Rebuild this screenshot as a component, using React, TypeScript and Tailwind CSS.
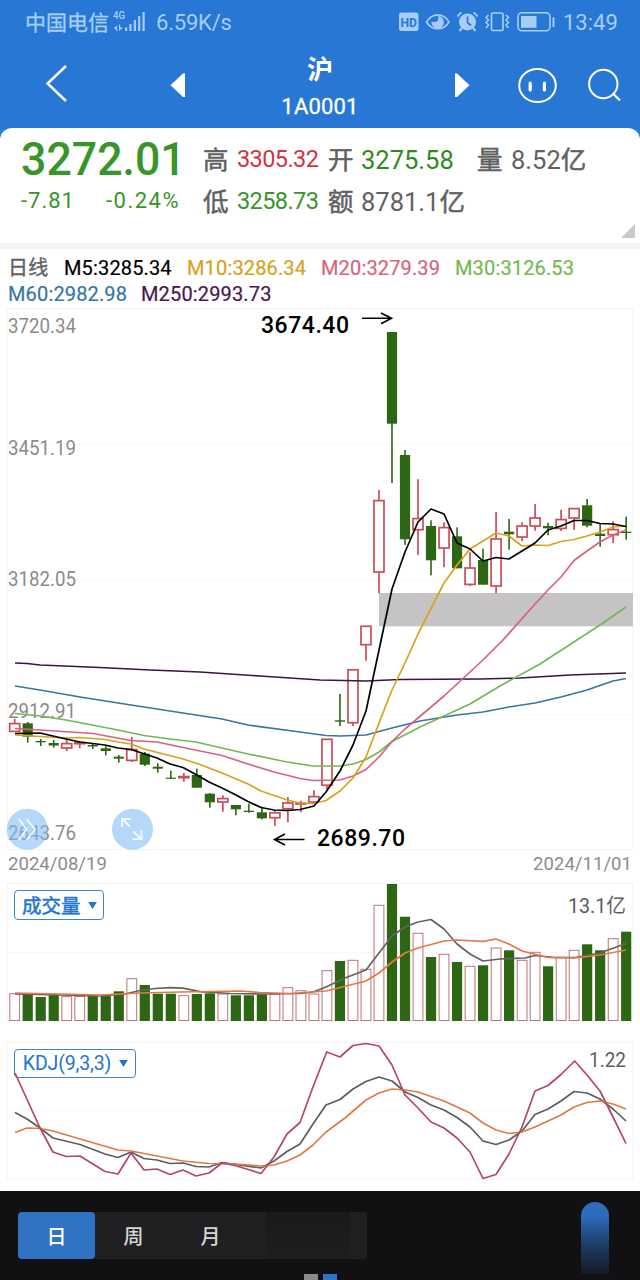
import React from 'react';

type Candle = [up: 0 | 1, high: number, top: number, bottom: number, low: number, volumeTop: number];
type Point = [number, number];

const candles: Candle[] = [
  [1, 718.7, 723.3, 731.7, 732, 993.7], [0, 722, 723.3, 736.7, 742.7, 994],
  [0, 739, 741, 742.3, 746, 997], [0, 740, 743, 745.5, 747.7, 994.7],
  [1, 740, 743.3, 748.3, 751, 996.7], [1, 741, 742.5, 744, 748.3, 996.5],
  [0, 743.3, 745, 746.5, 749, 995.5], [0, 745.5, 748.3, 751, 755.5, 996],
  [0, 755, 756.7, 758.7, 762.7, 991.3], [1, 736.7, 749.3, 760.7, 762, 978.7],
  [0, 752, 753.7, 764.7, 766, 985], [0, 763.3, 766.7, 768.7, 772.7, 993.7],
  [0, 770.7, 777.6, 778.8, 779, 993.7], [1, 773, 776.3, 778, 781.7, 995.7],
  [0, 768.7, 775, 787.7, 787.7, 994], [0, 793, 793.7, 802.3, 807.7, 993.3],
  [1, 795.3, 798.3, 802.3, 811.7, 994], [0, 805, 805, 809.3, 815.3, 995.3],
  [0, 803.7, 810.7, 812, 812.7, 995.3], [0, 806.7, 812.3, 818.3, 819.3, 994.3],
  [1, 810.7, 812.5, 818, 825.7, 994.3], [1, 797, 802.7, 809, 822.3, 987.7],
  [1, 800.7, 803, 804.3, 812.3, 990.7], [1, 790.3, 796.3, 802.3, 802.3, 994],
  [1, 739, 739, 785.5, 789.3, 970.7], [0, 694, 720.3, 721.7, 726, 961],
  [1, 669.5, 669.5, 723, 726, 960.3], [1, 626, 626, 645, 660.7, 969.3],
  [1, 490, 500.3, 572.3, 593.3, 905.3], [0, 332, 332, 423.7, 483, 884],
  [0, 450, 455, 539.3, 545, 916.7], [1, 479.3, 518.3, 530, 555, 933.3],
  [0, 520.3, 526, 560.3, 575.3, 957], [1, 522.3, 527.3, 548.3, 567.3, 954.3],
  [0, 527.3, 536.3, 568.3, 568.3, 962], [1, 552.3, 567.7, 584.7, 586, 966.3],
  [0, 548.7, 560, 584.7, 584.7, 965.3], [1, 512, 538.7, 586.3, 593.3, 948],
  [0, 519, 531.7, 534.3, 549.7, 950.3], [1, 522.3, 525.7, 537.3, 541.3, 960.3],
  [1, 504, 517.7, 526.3, 530.7, 952.3], [0, 522.7, 526, 528.3, 535.3, 966.3],
  [1, 509.7, 519.3, 528.7, 531, 957.3], [1, 508.3, 508.3, 518.3, 530, 950.3],
  [0, 499, 505.3, 525.7, 527.3, 944.3], [0, 523.7, 533.7, 536, 546.7, 950.3],
  [1, 521.3, 529.3, 535, 543, 938.7], [0, 516.7, 531.7, 533, 539.7, 931.7],
];

const averages: { color: string; points: Point[] }[] = [
  { color: '#3b1345', points: [[15, 663], [27, 663.5], [40, 665], [100, 667.5], [150, 670], [200, 672], [260, 676], [320, 680], [366, 681], [400, 679.5], [480, 679], [520, 678], [570, 675], [626, 673]] },
  { color: '#3676a0', points: [[15, 686], [40, 690], [80, 697], [131, 705], [183, 713], [222, 719], [248, 725], [300, 732], [326, 735.5], [340, 736], [366, 735], [392, 728], [420, 721], [457, 715], [483, 712], [509, 707], [535, 703], [561, 697], [587, 690], [613, 681], [626, 678.5]] },
  { color: '#72b950', points: [[15, 713.5], [40, 716], [66, 720], [92, 725], [118, 730], [144, 735.5], [170, 739], [196, 742], [222, 748], [248, 754], [287, 762], [313, 766], [340, 766], [353, 764], [366, 759.5], [379, 752], [392, 741.5], [420, 727], [470, 704], [500, 686], [540, 664], [577, 640], [600, 625], [626, 607]] },
  { color: '#d7637b', points: [[15, 728.5], [40, 730], [93, 733.5], [131, 740.5], [157, 742], [183, 747.5], [222, 755.5], [248, 764], [274, 772], [300, 778.5], [313, 780.5], [340, 780], [353, 776], [366, 769.5], [379, 757], [392, 741.5], [405, 729], [444, 696], [483, 660], [503, 640], [535, 604], [548, 590], [561, 577], [574, 560.5], [587, 551], [600, 542], [613, 535], [626, 530]] },
  { color: '#d9a21e', points: [[15, 735], [66, 738], [80, 737.5], [105, 739.5], [118, 742], [131, 744], [144, 749], [183, 759], [200, 764.5], [222, 773], [248, 784], [261, 791], [287, 800], [300, 803], [314, 803.5], [326, 800.5], [340, 791], [353, 778], [366, 757], [379, 723], [392, 690], [405, 663], [418, 634], [444, 583], [457, 565], [470, 549], [483, 541], [496, 533], [509, 536], [522, 546], [535, 545], [548, 545.5], [561, 541.5], [574, 539.5], [587, 536], [600, 532], [613, 527], [626, 526]] },
  { color: '#000000', points: [[15, 733.5], [40, 733], [66, 739], [80, 742], [105, 745], [118, 748], [131, 749.5], [157, 758], [170, 764], [183, 767.5], [196, 774.5], [209, 782], [222, 788], [235, 794.5], [248, 801.5], [261, 807.5], [274, 810], [287, 810.5], [300, 809.5], [314, 806], [326, 792], [340, 771], [353, 745], [366, 711], [379, 650], [392, 589], [405, 552], [418, 522], [431, 509], [444, 514], [457, 543], [470, 549], [483, 561], [496, 557.5], [509, 559], [535, 543], [548, 530], [561, 526], [574, 520.5], [587, 520.5], [600, 523.5], [613, 524], [626, 526.5]] },
];

const volumeLines: { color: string; points: Point[] }[] = [
  { color: '#66635e', points: [[15, 994], [60, 995], [100, 996], [125, 994], [140, 990.5], [155, 988.5], [170, 987.7], [183, 988.2], [200, 991.7], [230, 993.5], [262, 994], [300, 993.5], [313, 992], [326, 987], [345, 978], [366, 970], [379, 953], [392, 936], [405, 927], [418, 922], [431, 919.5], [444, 929], [457, 944], [470, 954], [483, 961], [500, 959], [525, 958], [535, 955.5], [555, 957.5], [575, 957.5], [600, 953], [626, 943.5]] },
  { color: '#e17a48', points: [[15, 993], [60, 994], [100, 995], [140, 993], [180, 992], [240, 991], [260, 992.5], [290, 993.5], [326, 991], [366, 981], [379, 973], [392, 962], [405, 953], [418, 948], [444, 941], [457, 940], [483, 941.3], [496, 939], [509, 944], [522, 951], [548, 957.5], [575, 958], [600, 955], [626, 950]] },
];

const kdjLines: { color: string; points: Point[] }[] = [
  { color: '#5b5f5c', points: [[15, 1112.5], [27, 1119], [40, 1128], [53, 1138], [80, 1144.5], [105, 1154], [118, 1157.5], [131, 1152], [144, 1158.5], [157, 1160], [170, 1163.5], [183, 1163], [196, 1166.5], [209, 1167], [222, 1162.5], [261, 1168], [274, 1161], [287, 1151.5], [300, 1144], [313, 1124], [326, 1105], [340, 1099.5], [353, 1089], [366, 1081.5], [379, 1077], [392, 1081], [405, 1092], [418, 1097.5], [431, 1105], [444, 1110], [457, 1117.5], [470, 1127], [483, 1141], [496, 1144.5], [509, 1140], [522, 1131], [535, 1114.5], [548, 1109], [561, 1101], [574, 1091.5], [587, 1093], [600, 1099], [613, 1109], [626, 1121]] },
  { color: '#e07a45', points: [[15, 1132.5], [27, 1128], [40, 1128.5], [53, 1131], [80, 1139], [118, 1150], [131, 1151], [157, 1156], [183, 1161], [209, 1163.5], [235, 1164], [261, 1166], [274, 1165], [287, 1161], [300, 1155], [313, 1145], [326, 1132], [345, 1118], [366, 1100], [379, 1093], [392, 1089], [405, 1090], [418, 1092], [444, 1101], [470, 1113], [483, 1123], [496, 1130], [509, 1133.5], [522, 1132], [535, 1127], [561, 1115], [574, 1107], [587, 1102.5], [600, 1101], [613, 1104], [626, 1109]] },
  { color: '#b54668', points: [[15, 1073], [40, 1128], [53, 1152], [66, 1156.5], [80, 1156], [105, 1171.5], [118, 1174], [131, 1153], [144, 1170], [157, 1169], [170, 1174.5], [183, 1170], [196, 1176], [209, 1173], [222, 1163], [235, 1165.5], [261, 1173.5], [274, 1157], [287, 1134], [300, 1122.5], [313, 1087], [326.7, 1052], [340, 1057], [353, 1045.5], [366, 1043.5], [379, 1046], [392, 1065], [405, 1095], [418, 1108], [431, 1122], [444, 1128], [457, 1138], [470, 1152], [483, 1178.5], [496, 1174.5], [509, 1154], [522, 1127], [535, 1091], [548, 1085.5], [561, 1074.5], [574.7, 1061], [587, 1075], [600, 1091], [613, 1117], [626, 1143.5]] },
];

const GREEN = '#2e6714';
const barX = (index: number) => 14.7 + index * 13.01;
const toPath = (points: Point[]) => points.map(([x, y]) => `${x},${y}`).join(' ');

function Lines({ lines }: { lines: { color: string; points: Point[] }[] }) {
  return (
    <>
      {lines.map((line) => (
        <polyline key={line.color} points={toPath(line.points)} fill="none" stroke={line.color} strokeWidth="1.7" strokeLinejoin="round" />
      ))}
    </>
  );
}

function AxisLabel({ y, children }: { y: number; children: string }) {
  return (
    <text x="8" y={y} textLength="68" lengthAdjust="spacingAndGlyphs" fill="#8b8b8b" className="text-[19.5px]">
      {children}
    </text>
  );
}

function PriceChart() {
  return (
    <div className="h-[542px]">
      <svg viewBox="0 308 640 542" className="block h-[542px] w-full overflow-visible">
        <rect x="7.5" y="308.5" width="625" height="541" fill="none" stroke="#f4f4f4" />
        <path d="M8 444.5H632M8 579.5H632M8 714.5H632" stroke="#f8f8f8" />
        <rect x="379" y="593" width="254" height="33.3" fill="#c5c3c4" />
        <AxisLabel y={333}>3720.34</AxisLabel>
        <AxisLabel y={455}>3451.19</AxisLabel>
        <AxisLabel y={586}>3182.05</AxisLabel>
        <AxisLabel y={718}>2912.91</AxisLabel>
        <AxisLabel y={840}>2643.76</AxisLabel>
        {candles.map(([up, high, top, bottom, low], i) => {
          const x = barX(i);
          return up ? (
            <g key={i} stroke="#cb4d56" strokeWidth="1.7" fill="#fff">
              <path d={`M${x} ${high}V${top}M${x} ${bottom}V${low}`} />
              <rect x={x - 5} y={top + 0.3} width="10" height={Math.max(bottom - top - 0.6, 0.5)} />
            </g>
          ) : (
            <g key={i} fill={GREEN}>
              <rect x={x - 0.8} y={high} width="1.6" height={low - high} />
              <rect x={x - 5.1} y={top} width="10.2" height={bottom - top} />
            </g>
          );
        })}
        <Lines lines={averages} />
        <g fill="none" stroke="#000" strokeWidth="1.6">
          <path d="M362 318.3H391M381 313L391.5 318.3L381 323.7" />
          <path d="M304.5 839.5H275M285 834L274.5 839.5L285 845" />
        </g>
        <text x="261" y="332.5" textLength="88" lengthAdjust="spacing" className="text-[23px] font-medium">3674.40</text>
        <text x="317" y="846" textLength="88" lengthAdjust="spacing" className="text-[23px] font-medium">2689.70</text>
        <g fill="#83bdf7" fillOpacity="0.6">
          <circle cx="27.3" cy="829.3" r="20.5" />
          <circle cx="132.5" cy="829.3" r="20.5" />
        </g>
        <g fill="none" stroke="#fff" strokeOpacity="0.85" strokeWidth="1.8">
          <path d="M19 819L26.5 829.3L19 840M26.5 819L35 829.3L26.5 840" />
          <path d="M130 826.5L122 819M122 827V819H131M133 831.5L141.5 839M141.5 830V839H132.5" />
        </g>
      </svg>
    </div>
  );
}

function VolumeChart() {
  return (
    <div className="relative h-[139px]">
      <button className="absolute top-[7px] left-[14px] flex h-[30px] w-[90px] items-center rounded-[4px] border border-[#3988c4] pl-[7px] text-[19.5px] text-[#2177cf]">
        <span className="pt-[3px] [-webkit-text-stroke:0.5px_currentColor]">成交量</span>
        <svg viewBox="0 0 10 8" className="ml-[7px] h-[7px] w-[9px]"><path d="M0 0H10L5 8Z" fill="currentColor" /></svg>
      </button>
      <svg viewBox="0 883 640 139" className="pointer-events-none relative block h-[139px] w-full">
        <rect x="7.5" y="883.5" width="625" height="137" fill="none" stroke="#f4f4f4" />
        <path d="M8 952.5H632" stroke="#f8f8f8" />
        {candles.map(([up, , , , , top], i) =>
          up ? (
            <rect key={i} x={barX(i) - 4.9} y={top} width="9.8" height={1020.5 - top} fill="#fff" stroke="#bd7378" strokeWidth="1" />
          ) : (
            <rect key={i} x={barX(i) - 5.1} y={top} width="10.2" height={1021 - top} fill={GREEN} />
          ),
        )}
        <Lines lines={volumeLines} />
        <text x="568" y="913" textLength="58" lengthAdjust="spacingAndGlyphs" fill="#5d5d5d" className="text-[20px]">13.1亿</text>
      </svg>
    </div>
  );
}

function KdjChart() {
  return (
    <div className="relative mt-[20px] h-[138px]">
      <button className="absolute top-[7px] left-[14px] flex h-[29px] w-[122px] items-center rounded-[4px] border border-[#3988c4] pl-[7px] text-[19.5px] text-[#2177cf]">
        <span className="w-[90px] pt-px tracking-[-0.15px]">KDJ(9,3,3)</span>
        <svg viewBox="0 0 10 8" className="ml-[7px] h-[7px] w-[9px]"><path d="M0 0H10L5 8Z" fill="currentColor" /></svg>
      </button>
      <svg viewBox="0 1042 640 138" className="pointer-events-none relative block h-[138px] w-full">
        <rect x="7.5" y="1042.5" width="625" height="136.5" fill="none" stroke="#f4f4f4" />
        <path d="M8 1110.5H632" stroke="#f8f8f8" />
        <Lines lines={kdjLines} />
        <text x="589" y="1067" textLength="37" lengthAdjust="spacingAndGlyphs" fill="#5d5d5d" className="text-[20px]">1.22</text>
      </svg>
    </div>
  );
}

function StatusBar() {
  return (
    <div className="flex h-[44px] items-center pl-[25px] text-[#a5cdf8]">
      <span className="w-[87px] pt-[2px] text-[21px] leading-none [-webkit-text-stroke:0.3px_currentColor]">中国电信</span>
      <svg viewBox="112 9 35 26" className="h-[26px] w-[35px]" fill="currentColor">
        <text x="113" y="19" textLength="12" lengthAdjust="spacingAndGlyphs" className="text-[10px] font-medium">4G</text>
        <path d="M116 25.500V31H117.200V25.500L114 28V28.700H116ZM119 24.500V31L122.500 28.300V27.500H120.200V24.500Z" />
        <path d="M125 27.5H127.200V31H125ZM129.400 24H131.600V31H129.400ZM133.800 20H136V31H133.800ZM138.100 16H140.300V31H138.100ZM142.500 12H144.700V31H142.500Z" />
      </svg>
      <span className="ml-[9px] w-[76px] pt-[2px] text-[22px] leading-none tracking-[-0.2px] whitespace-nowrap">6.59K/s</span>
      <svg viewBox="398 9 160 26" className="ml-[166px] h-[26px] w-[160px]" fill="none" stroke="currentColor">
        <rect x="399" y="12.5" width="19.5" height="18.5" rx="2.5" fill="currentColor" stroke="none" />
        <text x="400.5" y="26.5" textLength="16.5" lengthAdjust="spacingAndGlyphs" fill="#2877d5" stroke="none" className="text-[13px] font-bold">HD</text>
        <path d="M426.5 22C432 12.5 443.500 12.500 449 22C443.500 31 432 31 426.500 22Z" strokeWidth="1.6" />
        <path d="M438 16A6.200 6.200 0 1 1 431.500 21.500Q436 23 438 20.500Q439 18 438 16Z" fill="currentColor" stroke="none" />
        <circle cx="467.5" cy="22" r="8.5" fill="currentColor" stroke="none" />
        <path d="M457.5 16.500Q459 14 461.500 12.500M477.500 16.500Q476 14 473.500 12.500M462 28L459.500 31M473 28L475.500 31" strokeWidth="2" />
        <path d="M467.5 16.500V22.500L471 25.500" stroke="#2877d5" strokeWidth="1.7" />
        <rect x="491.5" y="13" width="11.5" height="17.5" rx="1.5" strokeWidth="1.7" />
        <path d="M488.5 15L486 17.500L488.500 20L486 22.500L488.500 25L486 28M506 15L508.500 17.500L506 20L508.500 22.500L506 25L508.500 28" strokeWidth="1.6" />
        <rect x="518" y="12.8" width="32" height="18" rx="4" strokeWidth="1.6" />
        <rect x="521" y="16" width="15.5" height="11.8" fill="currentColor" stroke="none" />
        <path d="M553.5 17.500V27" strokeWidth="2" />
      </svg>
      <span className="ml-[5px] pt-[2px] text-[22px] leading-none">13:49</span>
    </div>
  );
}

function TitleBar() {
  return (
    <div className="flex h-[84px] text-white">
      <svg viewBox="0 44 220 84" className="h-[84px] w-[220px]">
        <path d="M66 66L47.500 83.500L66 101" fill="none" stroke="#fff" strokeWidth="2.5" />
        <path d="M170.500 85.300L183 73.500H185V97H183Z" fill="#fff" />
      </svg>
      <div className="flex w-[200px] flex-col items-center pt-[11px]">
        <span className="text-[26px] leading-[30px] font-bold">沪</span>
        <span className="mt-[8px] text-[22px] leading-[28px] tracking-[0.2px] [-webkit-text-stroke:0.3px_currentColor]">1A0001</span>
      </div>
      <svg viewBox="420 44 220 84" className="h-[84px] w-[220px]" fill="none" stroke="#fff">
        <path d="M455 73.500H457L469.500 85.300L457 97H455Z" fill="#fff" stroke="none" />
        <ellipse cx="537.5" cy="85.5" rx="18.3" ry="16.5" strokeWidth="2" />
        <path d="M530.2 83V90M544.400 83V90" strokeWidth="3.2" strokeLinecap="round" />
        <circle cx="603.3" cy="84" r="14.2" strokeWidth="2" />
        <path d="M613 93.500L620 100.500" strokeWidth="2.3" />
      </svg>
    </div>
  );
}

function Quote() {
  return (
    <section className="relative flex h-[115px] rounded-t-[12px] bg-white text-[#616161]">
      <div className="w-[203px] pt-[6px] pl-[21px] text-[#37952a]">
        <div className="h-[50px] w-[180px] origin-left scale-x-[0.95] text-[47px] leading-[50px] font-medium whitespace-nowrap">3272.01</div>
        <div className="flex h-[32px] items-center text-[22px]">
          <span className="w-[85px] tracking-[1px]">-7.81</span>
          <span className="tracking-[1.5px]">-0.24%</span>
        </div>
      </div>
      <div className="grid h-[95px] grid-cols-[34px_91px_33px_116px_34px_90px] grid-rows-[42px_42px] items-center pt-[11px] text-[25.5px] whitespace-nowrap">
        <span className="[-webkit-text-stroke:0.5px_currentColor]">高</span>
        <span className="text-[23.5px] tracking-[-0.6px] text-[#ce3545]">3305.32</span>
        <span className="[-webkit-text-stroke:0.5px_currentColor]">开</span>
        <span className="text-[#2d8c18]">3275.58</span>
        <span className="[-webkit-text-stroke:0.5px_currentColor]">量</span>
        <span>8.52<span className="[-webkit-text-stroke:0.5px_currentColor]">亿</span></span>
        <span className="[-webkit-text-stroke:0.5px_currentColor]">低</span>
        <span className="text-[23.5px] tracking-[-0.6px] text-[#37952a]">3258.73</span>
        <span className="[-webkit-text-stroke:0.5px_currentColor]">额</span>
        <span>8781.1<span className="[-webkit-text-stroke:0.5px_currentColor]">亿</span></span>
      </div>
      <svg viewBox="0 0 14 14" className="absolute top-[96px] left-[621px] h-[14px] w-[14px]"><path d="M14 0V14H0Z" fill="#c9c9c9" /></svg>
    </section>
  );
}

function Legend() {
  return (
    <div className="h-[59px] border-t-[6px] border-[#f4f4f5] bg-white pt-[7px] pl-[8px] text-[20px] leading-[25.5px] tracking-[0.15px] whitespace-nowrap [-webkit-text-stroke:0.2px_currentColor]">
      <div className="flex">
        <span className="w-[56px] text-[#616161] [-webkit-text-stroke:0.4px_currentColor]">日线</span>
        <span className="w-[123px]">M5:3285.34</span>
        <span className="w-[134px] text-[#daa020]">M10:3286.34</span>
        <span className="w-[134px] text-[#d7637b]">M20:3279.39</span>
        <span className="text-[#72b950]">M30:3126.53</span>
      </div>
      <div className="flex">
        <span className="w-[133px] text-[#3676a0]">M60:2982.98</span>
        <span className="text-[#4a164d]">M250:2993.73</span>
      </div>
    </div>
  );
}

function Footer() {
  return (
    <footer className="mt-[11px] flex h-[89px] flex-col bg-[#111113]">
      <div className="flex h-[83px] justify-between pr-[31px] pl-[18px]">
        <nav className="mt-[21px] flex h-[47px] w-[349px] rounded-[4px] bg-[#201f22] text-[20px] font-medium text-[#d6d6d6]">
          <span className="flex w-[77px] items-center justify-center rounded-[4px] bg-[#3072c4] pt-[2px] text-white">日</span>
          <span className="flex w-[77px] items-center justify-center pt-[2px]">周</span>
          <span className="flex w-[77px] items-center justify-center pt-[2px]">月</span>
          <span className="ml-[17px] w-[84px] bg-linear-to-b from-[#1a191b] to-[#1e1d20]" />
        </nav>
        <div className="mt-[11px] h-[72px] w-[28px] rounded-t-full bg-linear-to-b from-[#2d6bbb] from-20% via-[#1c3d66] via-60% to-[#131a26]" />
      </div>
      <div className="flex h-[6px] justify-center gap-[5px]">
        <span className="w-[14px] bg-[#8b898b]" />
        <span className="w-[14px] bg-[#3072c4]" />
      </div>
    </footer>
  );
}

export default function App() {
  return (
    <main className="h-[1280px] w-[640px] overflow-hidden bg-white font-['Roboto','Noto_Sans_CJK_SC',sans-serif] text-black">
      <div className="bg-[#2877d5]">
        <StatusBar />
        <TitleBar />
        <Quote />
      </div>
      <Legend />
      <div className="-mt-px h-[543px] pt-[7px]">
        <PriceChart />
      </div>
      <div className="mt-[6px] flex h-[33px] items-center justify-between px-[8px] pb-[3px] text-[18.5px] text-[#8b8b8b]">
        <span className="tracking-[0.05px]">2024/08/19</span>
        <span className="tracking-[0.05px]">2024/11/01</span>
      </div>
      <VolumeChart />
      <KdjChart />
      <Footer />
    </main>
  );
}
